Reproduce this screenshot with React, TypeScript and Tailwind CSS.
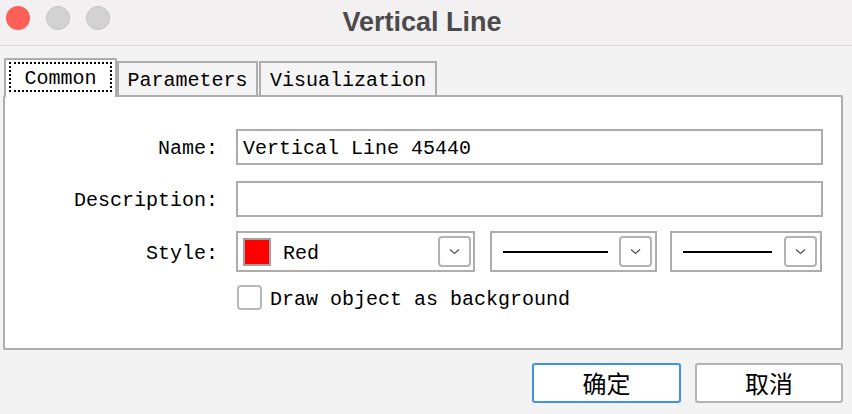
import React from "react";

const mono = { fontFamily: '"Liberation Mono", "DejaVu Sans Mono", monospace' };

function Chevron() {
  return (
    <svg width="11" height="7" viewBox="0 0 11 7" className="block">
      <path d="M1 1.5 L5.5 5.5 L10 1.5" fill="none" stroke="#555" strokeWidth="1.3" />
    </svg>
  );
}

function DropButton() {
  return (
    <div className="flex h-[31px] w-[33px] items-center justify-center rounded-[4px] border-2 border-[#b3b3b3] bg-white">
      <Chevron />
    </div>
  );
}

function LineSelect({ width, lineWidth }: { width: string; lineWidth: string }) {
  return (
    <div className={`flex h-[41px] items-center justify-between border-2 border-[#adadad] bg-white pl-[11px] pr-[3px] ${width}`}>
      <div className={`h-[2px] bg-black ${lineWidth}`} />
      <DropButton />
    </div>
  );
}

export default function App() {
  return (
    <div className="flex h-[414px] w-[852px] flex-col overflow-hidden bg-[#f3f3f3]" style={mono}>
      {/* title bar */}
      <div className="relative flex h-[46px] shrink-0 items-center justify-center border-b border-[#d8d8d8] bg-[#f2f0f1] pr-[8px]">
        <div className="absolute left-[6px] top-[6px] flex gap-[16px]">
          <div className="h-[24px] w-[24px] rounded-full bg-[#fe5f57]" />
          <div className="h-[24px] w-[24px] rounded-full border border-[#c4c4c4] bg-[#d2d2d2]" />
          <div className="h-[24px] w-[24px] rounded-full border border-[#c4c4c4] bg-[#d2d2d2]" />
        </div>
        <span
          className="text-[27px] font-bold leading-none text-[#4b4b4b]"
          style={{ fontFamily: '"Liberation Sans", Arial, sans-serif' }}
        >
          Vertical Line
        </span>
      </div>

      <div className="flex flex-col pl-[3px] pr-[9px] pt-[12px]">
        {/* tabs */}
        <div className="flex h-[37px] items-end pl-[1px]">
          <div className="relative z-10 -mb-[2px] flex h-[39px] w-[113px] rounded-t-[2px] border-x-2 border-t-2 border-[#adadad] bg-white px-[3px] pt-[2px] pb-[5px]">
            <div className="flex flex-1 items-center justify-center border-2 border-dotted border-black pt-[3px] text-[20px] leading-none text-black">
              Common
            </div>
          </div>
          <div className="flex h-[34px] w-[141px] items-center justify-center border-x-2 border-t-2 border-[#adadad] bg-[#f4f4f4] pt-[3px] text-[20px] leading-none text-black">
            Parameters
          </div>
          <div className="ml-[1px] flex h-[34px] w-[178px] items-center justify-center border-x-2 border-t-2 border-[#adadad] bg-[#f4f4f4] pt-[3px] text-[20px] leading-none text-black">
            Visualization
          </div>
        </div>

        {/* panel */}
        <div className="flex h-[255px] flex-col rounded-[2px] border-2 border-[#adadad] bg-white pt-[32px] text-[20px] leading-none text-black">
          <div className="flex items-center">
            <div className="w-[213px] pt-[4px] text-right">Name:</div>
            <div className="ml-[18px] flex h-[36px] w-[587px] items-center border-2 border-[#adadad] pl-[5px] pt-[4px]">
              Vertical Line 45440
            </div>
          </div>

          <div className="mt-[16px] flex items-center">
            <div className="w-[213px] pt-[4px] text-right">Description:</div>
            <div className="ml-[18px] h-[36px] w-[587px] border-2 border-[#adadad]" />
          </div>

          <div className="mt-[14px] flex items-center">
            <div className="w-[213px] pt-[4px] text-right">Style:</div>
            <div className="ml-[18px] flex gap-[15px]">
              <div className="flex h-[41px] w-[239px] items-center border-2 border-[#adadad] pl-[5px] pr-[2px]">
                <div className="h-[28px] w-[28px] border-2 border-[#a0a0a0] bg-[#ff0000]" />
                <span className="ml-[12px] flex-1 pt-[4px]">Red</span>
                <DropButton />
              </div>
              <LineSelect width="w-[167px]" lineWidth="w-[105px]" />
              <div className="-ml-[2px]">
                <LineSelect width="w-[152px]" lineWidth="w-[89px]" />
              </div>
            </div>
          </div>

          <div className="mt-[13px] flex items-center pl-[232px]">
            <div className="h-[25px] w-[25px] rounded-[4px] border-2 border-[#b8b8b8] bg-white" />
            <span className="ml-[8px] pt-[4px]">Draw object as background</span>
          </div>
        </div>

        {/* buttons */}
        <div
          className="mt-[13px] flex justify-end gap-[14px] text-[24px] leading-none text-black"
          style={{ fontFamily: '"Noto Sans CJK SC", sans-serif' }}
        >
          <button className="flex h-[40px] w-[149px] items-center justify-center rounded-[3px] border-2 border-[#3f91ee] bg-white">
            确定
          </button>
          <button className="flex h-[40px] w-[148px] items-center justify-center rounded-[3px] border-2 border-[#b3b3b3] bg-white">
            取消
          </button>
        </div>
      </div>
    </div>
  );
}
